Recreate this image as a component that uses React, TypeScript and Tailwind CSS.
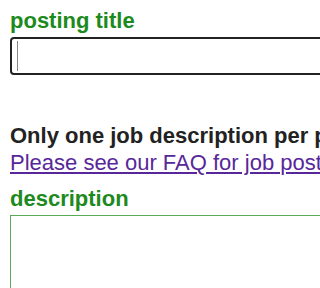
export default function App() {
  return (
    <div className="h-[288px] w-full overflow-hidden bg-white pl-[10px] pt-[7px] font-['Liberation_Sans',Arial,sans-serif] text-[22px] leading-[27px]">
      <label className="block font-bold text-[#1c8a1c]">posting title</label>
      <div className="relative mt-[3px] h-[38px] w-[600px] rounded-[4px] border-2 border-[#222]">
        {/* text caret */}
        <span className="absolute left-[5px] top-[2px] h-[30px] w-px bg-[#888]" />
      </div>

      <div className="mt-[47px] whitespace-nowrap font-bold text-[#222]">
        Only one job description per posting
      </div>
      <a href="#" className="block whitespace-nowrap text-[#58279a] underline">
        Please see our FAQ for job postings
      </a>

      <label className="mt-[9px] block font-bold text-[#1c8a1c]">description</label>
      <div className="mt-[3px] h-[120px] w-[600px] border border-[#5aaa5a]" />
    </div>
  )
}
